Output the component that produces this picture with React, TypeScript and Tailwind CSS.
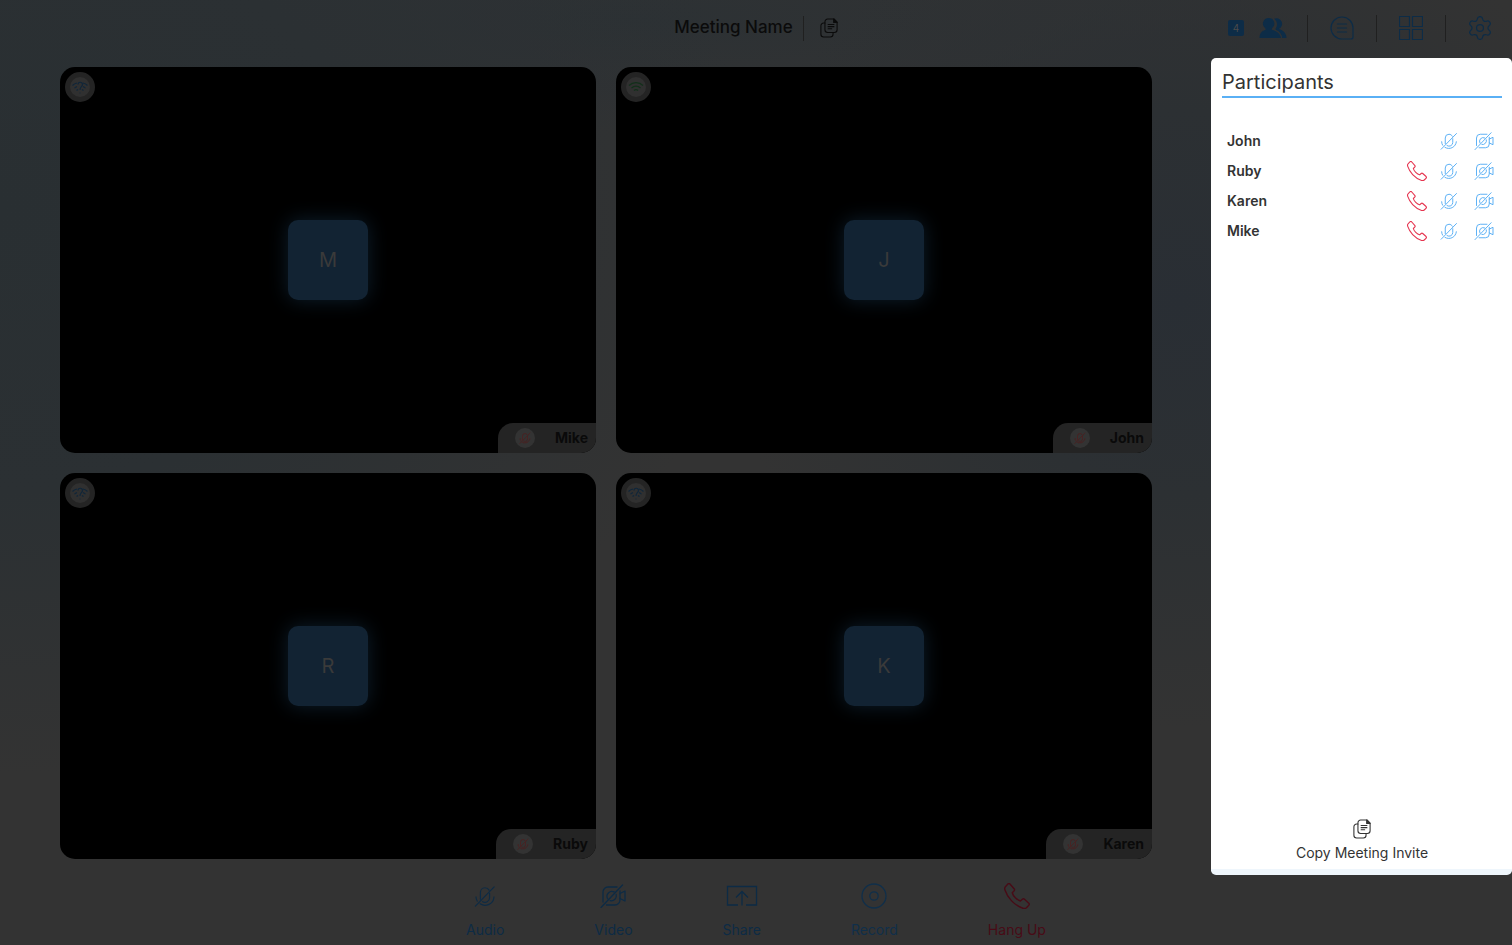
import React from "react";
import { Settings } from "lucide-react";

type IconProps = { className?: string };

const MicOff = ({ className }: IconProps) => (
  <svg viewBox="0 0 24 24" fill="none" stroke="currentColor" strokeWidth="1.3" strokeLinecap="round" className={className} aria-hidden="true">
    <path d="M7 15.5V8a5 5 0 0 1 5-5c2 0 3.600 1 4.400 2.600M17 9v5a5 5 0 0 1-7.600 4.200" />
    <path d="M2.200 13c0 1.800.5 3.400 1.400 4.700M6.600 20.500A9.800 9.800 0 0 0 21.800 13" />
    <path d="M22 2 1.500 23" />
  </svg>
);

const VideoOff = ({ className }: IconProps) => (
  <svg viewBox="0 0 26 24" fill="none" stroke="currentColor" strokeWidth="1.3" strokeLinecap="round" strokeLinejoin="round" className={className} aria-hidden="true">
    <path d="M3 18V8a5 5 0 0 1 5-5h9M20 7v9a5 5 0 0 1-5 5H6.500" />
    <path d="M7.600 14.800a5 5 0 0 1 6.500-6.900M16.200 10.500a5 5 0 0 1-6 6.200" />
    <path d="M20 9.500 25 7v10l-5-2.500" />
    <path d="M22.500 1 1 23.500" />
  </svg>
);

const Phone = ({ className }: IconProps) => (
  <svg viewBox="0 0 24 24" fill="none" stroke="currentColor" strokeWidth="1.3" strokeLinejoin="round" className={className} aria-hidden="true">
    <path d="M5.500.900 9.500 5.500c.5.700.3 1.300-.3 1.900L7.600 9c.6 2.800 4.600 6.800 7.600 7.600l1.800-1.600c.6-.5 1.200-.6 1.900 0l4 3.600c.7.800.5 1.500-.2 2.200l-2 2c-.8.700-2 .9-3.200.5C9 20.500 3 13 .9 6.500c-.5-1.500-.3-2.500.6-3.300L3.600.900c.6-.6 1.300-.6 1.900 0Z" />
  </svg>
);

const CopyDoc = ({ className }: IconProps) => (
  <svg viewBox="0 0 20 22" fill="none" stroke="currentColor" strokeWidth="1.2" strokeLinejoin="round" strokeLinecap="round" className={className} aria-hidden="true">
    <path d="M8.500 1h7L19 4.500V13a3 3 0 0 1-3 3H8.500a3 3 0 0 1-3-3V4a3 3 0 0 1 3-3Z" />
    <path d="M15.200 1v3.800H19Z" fill="currentColor" />
    <path d="M5.500 5.500H4a3 3 0 0 0-3 3V18a3 3 0 0 0 3 3h7.500a3 3 0 0 0 3-3v-2" />
    <path d="M9 7.200h6.500M9 9.500h6.500M9 11.800h4" />
  </svg>
);

const People = ({ className }: IconProps) => (
  <svg viewBox="0 0 28 22" fill="currentColor" className={className} aria-hidden="true">
    <path d="M15 1.700A5.600 5.600 0 1 1 19.800 12c4.600 1.300 7.700 4.500 7.700 9h-4.300c-.5-3.800-2.500-6.500-6-8-1-.5-1-1-.4-1.800 2-2.700 1.600-7.200-1.800-9.500Z" />
    <path d="M9.600 1a5.700 5.700 0 0 1 3.300 10.400c-.3.800 0 1.400.9 1.700C18 14.500 21.500 17 22 21H.5c0-4.500 2.300-7 5.500-8 .9-.3 1-.9.400-1.600A5.700 5.700 0 0 1 9.600 1Z" />
  </svg>
);

const Chat = ({ className }: IconProps) => (
  <svg viewBox="0 0 24 24" fill="none" stroke="currentColor" strokeWidth="1.200" strokeLinecap="round" className={className} aria-hidden="true">
    <path d="M12 1a11 11 0 0 1 11 11v9a2 2 0 0 1-2 2h-9a11 11 0 0 1 0-22Z" />
    <path d="M7.500 8h9M7.500 12h9M7.500 16h9" />
  </svg>
);

const GridIcon = ({ className }: IconProps) => (
  <svg viewBox="0 0 24 24" fill="none" stroke="currentColor" strokeWidth="1.200" className={className} aria-hidden="true">
    <path d="M.5.5h10v10H.5ZM13.500.5h10v10h-10ZM.5 13.500h10v10H.5ZM13.500 13.500h10v10h-10Z" />
  </svg>
);

const Share = ({ className }: IconProps) => (
  <svg viewBox="0 0 32 24" fill="none" stroke="currentColor" strokeWidth="1.300" className={className} aria-hidden="true">
    <path d="M12 21H1.500V2.500h29V21H20M16 21.500V8M10 13.500 16 7.500l6 6" />
  </svg>
);

const RecordIcon = ({ className }: IconProps) => (
  <svg viewBox="0 0 26 26" fill="none" stroke="currentColor" strokeWidth="1.300" className={className} aria-hidden="true">
    <circle cx="13" cy="13" r="12" />
    <circle cx="13" cy="13" r="4.200" />
  </svg>
);

const Signal = ({ known }: { known: boolean }) => (
  <svg viewBox="0 0 18 14" fill="none" stroke="currentColor" strokeWidth="1.200" className="h-3.5 w-[18px]" aria-hidden="true">
    {known ? (
      <path d="M2 5.500a10 10 0 0 1 14 0M4.500 8a6.500 6.500 0 0 1 9 0M7 10.500a3 3 0 0 1 4 0" />
    ) : (
      <>
        <path d="M1.500 5.500A9 9 0 0 1 6 3M12 3a9 9 0 0 1 4.500 2.500M3.500 8 6 6.500M12 6.500 14.500 8M5.500 10.500 7 9.500M11 9.500l1.500 1M8.500 13h1" />
        <path d="M7 4.500c0-3 4.500-3 4.500 0C11.500 6.500 9 6.500 9 10" />
      </>
    )}
  </svg>
);

const tiles = [
  { name: "Mike", known: false },
  { name: "John", known: true },
  { name: "Ruby", known: false },
  { name: "Karen", known: false },
];

const participants = [
  { name: "John", removable: false },
  { name: "Ruby", removable: true },
  { name: "Karen", removable: true },
  { name: "Mike", removable: true },
];

const Divider = ({ className = "" }: IconProps) => <span className={`w-px bg-[#202020] ${className}`} />;

function Tile({ name, known }: { name: string; known: boolean }) {
  return (
    <article className="relative flex items-center justify-center overflow-hidden rounded-[15px] bg-black">
      <span
        className={`absolute left-[5px] top-[5px] flex size-[30px] items-center justify-center rounded-full border-5 border-[#242424] bg-[#303030] ${
          known ? "text-[#12301a]" : "text-[#10263a]"
        }`}
      >
        <Signal known={known} />
      </span>
      <span className="flex size-20 items-center justify-center rounded-[10px] bg-[#122333] text-xl text-[#3a3a3a] shadow-[0_0_20px_#0d1e2c]">
        {name[0]}
      </span>
      <div className="absolute bottom-0 right-0 flex h-[30px] items-center gap-5 rounded-tl-[15px] bg-[#242424] pl-[17px] pr-2">
        <span className="flex size-5 items-center justify-center rounded-full bg-[#333333] text-[#531a1a]">
          <MicOff className="size-3" />
        </span>
        <span className="text-sm font-bold text-[#0a0a0a]">{name}</span>
      </div>
    </article>
  );
}

function Tool({ label, icon, tone }: { label: string; icon: React.ReactNode; tone: string }) {
  return (
    <button type="button" className={`flex flex-col items-center gap-[10px] text-sm ${tone}`}>
      <span className="flex h-7 items-center">{icon}</span>
      <span>{label}</span>
    </button>
  );
}

export default function App() {
  return (
    <div className="flex min-h-screen flex-col bg-[#333333] bg-[radial-gradient(ellipse_50%_60%_at_0%_22%,#292f32_0%,#2b3033_50%,transparent_100%),radial-gradient(ellipse_30%_45%_at_78%_32%,#292e34_0%,#2c3033_45%,transparent_100%),radial-gradient(ellipse_45%_12%_at_42%_2%,#2c3134_0%,transparent_100%)] font-['Inter','Liberation_Sans',sans-serif]">
      <header className="mb-0.5 grid h-14 grid-cols-[1fr_auto_1fr] items-center">
        <span />
        <div className="flex items-center">
          <h1 className="text-[17px] font-medium text-[#0b0b0b]">Meeting Name</h1>
          <Divider className="ml-[10px] h-[25px]" />
          <button type="button" aria-label="Copy meeting link" className="ml-4 text-[#0b0b0b]">
            <CopyDoc className="h-5 w-[18px]" />
          </button>
        </div>
        <div className="flex items-center justify-end gap-5 pr-5 text-[#0d2c47]">
          <button type="button" aria-label="Participants" className="flex items-center gap-[15px]">
            <span className="flex size-4 items-center justify-center rounded-xs bg-[#0d2c47] text-[10px] text-[#4a4a4a]">4</span>
            <People className="h-[22px] w-7" />
          </button>
          <div className="flex items-center gap-[22px]">
            <Divider className="h-[27px]" />
            <button type="button" aria-label="Chat"><Chat className="size-6" /></button>
            <Divider className="h-[27px]" />
            <button type="button" aria-label="Layout"><GridIcon className="size-6" /></button>
            <Divider className="h-[27px]" />
            <button type="button" aria-label="Settings">
              <Settings viewBox="1.5 1.5 21 21" strokeWidth={1.1} className="size-6" />
            </button>
          </div>
        </div>
      </header>

      <div className="flex flex-1">
        <main className="grid flex-1 grid-cols-2 grid-rows-2 gap-5 pb-4 pl-[60px] pr-[59px] pt-[9px]">
          {tiles.map((t) => (
            <Tile key={t.name} {...t} />
          ))}
        </main>

        <aside className="flex w-[301px] flex-col rounded-[5px] border-b-6 border-[#eff6fc] bg-white pl-[11px] pr-[10px] text-[#333333]">
          <h2 className="border-b-2 border-[#5ab0f5] pt-[10px] text-xl">Participants</h2>
          <ul className="mt-7 pl-[5px] pr-2">
            {participants.map((p) => (
              <li key={p.name} className="flex h-[30px] items-center">
                <span className="flex-1 text-sm font-semibold">{p.name}</span>
                {p.removable && (
                  <button type="button" aria-label={`Remove ${p.name}`} className="mr-[13px] text-[#e5344f]">
                    <Phone className="size-5" />
                  </button>
                )}
                <button type="button" aria-label={`Unmute ${p.name}`} className="mr-4 text-[#5ab0f5]">
                  <MicOff className="size-[18px]" />
                </button>
                <button type="button" aria-label={`Start video of ${p.name}`} className="text-[#5ab0f5]">
                  <VideoOff className="h-[18px] w-5" />
                </button>
              </li>
            ))}
          </ul>
          <button type="button" className="mb-[6px] mt-auto flex flex-col items-center gap-1 self-center text-sm">
            <CopyDoc className="h-5 w-[18px]" />
            Copy Meeting Invite
          </button>
        </aside>
      </div>

      <footer className="flex h-[70px] items-start justify-center gap-[90px] pt-[7px]">
        <Tool label="Audio" icon={<MicOff className="size-[22px]" />} tone="text-[#0d2b45]" />
        <Tool label="Video" icon={<VideoOff className="h-6 w-[26px]" />} tone="text-[#0d2b45]" />
        <Tool label="Share" icon={<Share className="h-6 w-8" />} tone="text-[#0d2b45]" />
        <Tool label="Record" icon={<RecordIcon className="size-[26px]" />} tone="text-[#102f4a]" />
        <Tool label="Hang Up" icon={<Phone className="size-[26px]" />} tone="text-[#480b16]" />
      </footer>
    </div>
  );
}
